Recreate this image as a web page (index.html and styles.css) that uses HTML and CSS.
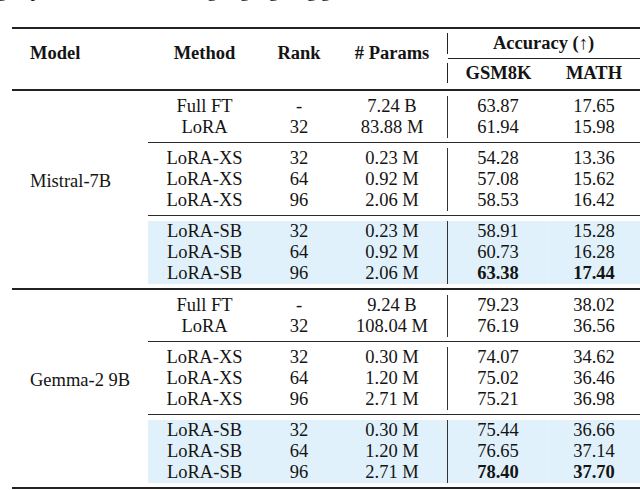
FILE: index.html
```html
<!DOCTYPE html>
<html lang="en">
<head>
<meta charset="utf-8">
<title>Accuracy table</title>
<link rel="stylesheet" href="styles.css">
</head>
<body>
<p class="caption">g improvements on reasoning, highlighting gains in the benchmarks for the best results and more</p>
<div class="tbl">
  <div class="head">
    <div class="lbl lbl-model">Model</div>
    <div class="lbl">Method</div>
    <div class="lbl">Rank</div>
    <div class="lbl"># Params</div>
    <div class="acc">
      <div class="acc-title">Accuracy (↑)</div>
      <div class="acc-rule"></div>
      <div class="acc-cols"><span>GSM8K</span><span>MATH</span></div>
    </div>
  </div>

  <div class="section">
    <div class="model">Mistral-7B</div>
    <div class="groups">
      <div class="group">
        <div class="row"><span>Full FT</span><span>-</span><span>7.24 B</span><span class="g">63.87</span><span class="m">17.65</span></div>
        <div class="row"><span>LoRA</span><span>32</span><span>83.88 M</span><span class="g">61.94</span><span class="m">15.98</span></div>
      </div>
      <div class="group">
        <div class="row"><span>LoRA-XS</span><span>32</span><span>0.23 M</span><span class="g">54.28</span><span class="m">13.36</span></div>
        <div class="row"><span>LoRA-XS</span><span>64</span><span>0.92 M</span><span class="g">57.08</span><span class="m">15.62</span></div>
        <div class="row"><span>LoRA-XS</span><span>96</span><span>2.06 M</span><span class="g">58.53</span><span class="m">16.42</span></div>
      </div>
      <div class="group hl">
        <div class="row"><span>LoRA-SB</span><span>32</span><span>0.23 M</span><span class="g">58.91</span><span class="m">15.28</span></div>
        <div class="row"><span>LoRA-SB</span><span>64</span><span>0.92 M</span><span class="g">60.73</span><span class="m">16.28</span></div>
        <div class="row"><span>LoRA-SB</span><span>96</span><span>2.06 M</span><span class="g best">63.38</span><span class="m best">17.44</span></div>
      </div>
    </div>
  </div>

  <div class="section">
    <div class="model">Gemma-2 9B</div>
    <div class="groups">
      <div class="group">
        <div class="row"><span>Full FT</span><span>-</span><span>9.24 B</span><span class="g">79.23</span><span class="m">38.02</span></div>
        <div class="row"><span>LoRA</span><span>32</span><span>108.04 M</span><span class="g">76.19</span><span class="m">36.56</span></div>
      </div>
      <div class="group">
        <div class="row"><span>LoRA-XS</span><span>32</span><span>0.30 M</span><span class="g">74.07</span><span class="m">34.62</span></div>
        <div class="row"><span>LoRA-XS</span><span>64</span><span>1.20 M</span><span class="g">75.02</span><span class="m">36.46</span></div>
        <div class="row"><span>LoRA-XS</span><span>96</span><span>2.71 M</span><span class="g">75.21</span><span class="m">36.98</span></div>
      </div>
      <div class="group hl">
        <div class="row"><span>LoRA-SB</span><span>32</span><span>0.30 M</span><span class="g">75.44</span><span class="m">36.66</span></div>
        <div class="row"><span>LoRA-SB</span><span>64</span><span>1.20 M</span><span class="g">76.65</span><span class="m">37.14</span></div>
        <div class="row"><span>LoRA-SB</span><span>96</span><span>2.71 M</span><span class="g best">78.40</span><span class="m best">37.70</span></div>
      </div>
    </div>
  </div>
</div>
</body>
</html>
```

FILE: styles.css
```css
html, body {
  margin: 0;
  padding: 0;
  background: #ffffff;
}

body {
  font-family: "Liberation Serif", "Times New Roman", serif;
  font-size: 18.5px;
  color: #141414;
  overflow: hidden;
  width: 640px;
  height: 490px;
}

.caption {
  margin: -19.5px 0 0 -3px;
  height: 21px;
  line-height: 21px;
  white-space: nowrap;
  overflow: hidden;
}

.tbl {
  margin: 25.5px 0 0 12px;
  border-top: 2px solid #222;
}

/* header */
.head {
  display: grid;
  grid-template-columns: 136px 113px 76px 110px 1fr;
  height: 60px;
  border-bottom: 2px solid #222;
  font-weight: bold;
}

.lbl {
  padding-top: 13.5px;
  line-height: 21px;
  text-align: center;
}

.lbl-model {
  text-align: left;
  padding-left: 18px;
}

.acc {
  display: flex;
  flex-direction: column;
}

.acc-title {
  margin: 4px 0;
  height: 21px;
  line-height: 21px;
  border-left: 1px solid #222;
  padding-right: 1px;
  text-align: center;
}

.acc-rule {
  height: 1px;
  margin-left: 1px;
  background: #222;
}

.acc-cols {
  margin-top: 4px;
  height: 20px;
  line-height: 20px;
  border-left: 1px solid #222;
  display: grid;
  grid-template-columns: 101px 90px;
  text-align: center;
}

/* body sections */
.section {
  display: grid;
  grid-template-columns: 136px 1fr;
  border-bottom: 2px solid #222;
}

.model {
  align-self: center;
  padding: 0 0 17px 18px;
  line-height: 21px;
  white-space: nowrap;
}

.group {
  padding: 4.5px 0;
}

.group + .group {
  border-top: 1px solid #2a2a2a;
}

.row {
  display: grid;
  grid-template-columns: 113px 76px 110px 102px 90px 1fr;
  height: 21px;
  line-height: 21px;
  text-align: center;
  white-space: nowrap;
}

.row .g {
  border-left: 1px solid #333;
  border-right: 1px solid transparent;
}

.hl .row {
  background: #e0f1fb;
}

.hl .row .g {
  border-right-color: #e5f3fb;
}

.best {
  font-weight: bold;
}
```
